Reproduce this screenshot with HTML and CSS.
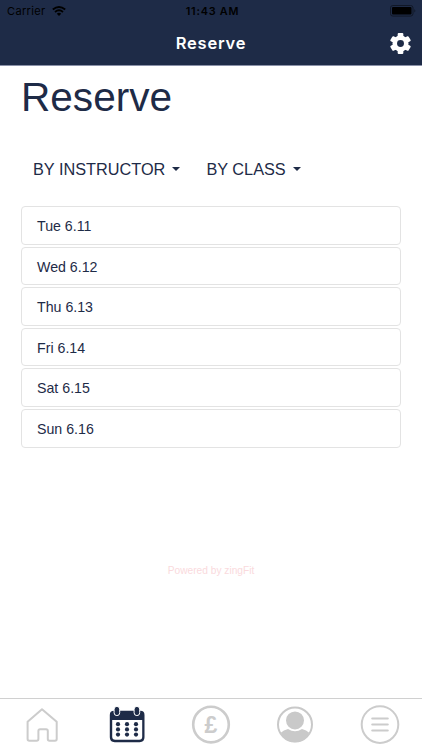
FILE: index.html
```
<!DOCTYPE html>
<html lang="en">
	<head>
		<title>Reserve</title>
		<meta charset="utf-8">
		<meta name="viewport" content="width=device-width, initial-scale=1">
		<link rel="stylesheet" href="styles.css">
	</head>
	<body>
		<header id="header">
			<div class="statusbar">
				<div class="carrier">
					<span>Carrier</span>
					<svg class="wifi" viewBox="0 0 14 10">
						<path d="M.8 3.6 Q7 -1.6 13.2 3.6" fill="none" stroke="#000" stroke-width="1.9"/>
						<path d="M3 6 Q7 2.6 11 6" fill="none" stroke="#000" stroke-width="1.8"/>
						<path d="M7 10 L4.8 7.7 Q7 6 9.2 7.7 Z"/>
					</svg>
				</div>
				<div class="time">11:43 AM</div>
				<svg class="battery" viewBox="0 0 26 12">
					<rect x=".5" y=".5" width="22.5" height="10.6" rx="2.4" fill="none" stroke="#111827"/>
					<rect x="2" y="2" width="19.5" height="7.6" rx="1"/>
					<path d="M24.4 4 Q26.2 5.8 24.4 7.6 Z" fill="#111827"/>
				</svg>
			</div>
			<div class="navbar">
				<h2>Reserve</h2>
				<svg class="gear" viewBox="0 0 20 20">
					<g fill="#fff">
						<rect id="tooth" x="7.3" y="0" width="5.4" height="20" rx="1"/>
						<use href="#tooth" transform="rotate(60 10 10)"/>
						<use href="#tooth" transform="rotate(120 10 10)"/>
						<circle cx="10" cy="10" r="7.6"/>
					</g>
					<circle cx="10" cy="10" r="3.3" fill="#1e2b47"/>
				</svg>
			</div>
		</header>

		<main id="content">
			<h1>Reserve</h1>

			<div class="filters">
				<button class="byInstructor">BY INSTRUCTOR <span class="caret"></span></button>
				<button class="byClass">BY CLASS <span class="caret"></span></button>
			</div>

			<ul class="days">
				<li>Tue 6.11</li>
				<li>Wed 6.12</li>
				<li>Thu 6.13</li>
				<li>Fri 6.14</li>
				<li>Sat 6.15</li>
				<li>Sun 6.16</li>
			</ul>

			<p class="powered">Powered by zingFit</p>
		</main>

		<nav id="tabbar">
			<a href="#">
				<svg viewBox="0 0 40 40">
					<path d="M5.6 34V16.8L20 4.2l14.7 12.6V34q0 1.7-1.7 1.7h-5.5q-1.7 0-1.7-1.7v-8q0-1.7-1.7-1.7h-6q-1.7 0-1.7 1.7v8q0 1.7-1.7 1.7H7.3q-1.7 0-1.7-1.7z" fill="none" stroke="#ccc" stroke-width="2" stroke-linejoin="round"/>
				</svg>
			</a>
			<a href="#">
				<svg viewBox="0 0 40 40" fill="#1e2b47">
					<path fill-rule="evenodd" d="M7 5.8h26.4q4.1 0 4.1 4.1V32.3q0 4.9-4.9 4.9H7.7q-4.9 0-4.9-4.9V9.9q0-4.1 4.2-4.1zM5.2 15v16.8q0 3 3 3h24q3 0 3-3V15z"/>
					<g stroke="#fff">
						<rect x="7.1" y="1.4" width="5.6" height="9.2" rx="2.8"/>
						<rect x="27.1" y="1.4" width="5.6" height="9.2" rx="2.8"/>
					</g>
					<circle cx="11" cy="19.2" r="2.1"/><circle cx="20" cy="19.2" r="2.1"/><circle cx="29" cy="19.2" r="2.1"/>
					<circle cx="11" cy="24.4" r="2.1"/><circle cx="20" cy="24.4" r="2.1"/><circle cx="29" cy="24.4" r="2.1"/>
					<circle cx="11" cy="29.6" r="2.1"/><circle cx="20" cy="29.6" r="2.1"/><circle cx="29" cy="29.6" r="2.1"/>
				</svg>
			</a>
			<a href="#">
				<svg viewBox="0 0 40 40">
					<circle cx="20" cy="19.6" r="17.8" fill="none" stroke="#ccc" stroke-width="2.6"/>
					<text x="20" y="27.6" class="pound">£</text>
				</svg>
			</a>
			<a href="#">
				<svg viewBox="0 0 40 40" fill="#c9c9c9">
					<circle cx="20" cy="19.6" r="17" fill="none" stroke="#c9c9c9" stroke-width="2"/>
					<circle cx="20" cy="15.4" r="9"/>
					<path d="M5.8 27.8Q8.5 24.9 13 24Q20 28.7 27 24Q31.5 24.9 34.2 27.8Q30 37.3 20 37.3Q10 37.3 5.8 27.8z"/>
				</svg>
			</a>
			<a href="#">
				<svg viewBox="0 0 40 40" fill="none" stroke="#ccc" stroke-width="2" stroke-linecap="round">
					<circle cx="20" cy="19.6" r="18.3"/>
					<path d="M12.2 13.6h15.6M12.2 19.6h15.6M12.2 25.6h15.6"/>
				</svg>
			</a>
		</nav>
	</body>
</html>
```
FILE: styles.css
```
/*
 * RESET
 */
* { margin: 0; padding: 0; box-sizing: border-box; }
a { text-decoration: none; }
button { border: none; background: none; }
ul { list-style: none; }
svg { display: block; }

/*
 * FONTS
 */
body, button { font-family: "Liberation Sans", Arial, sans-serif; }
#header { font-family: Inter, sans-serif; }

/*
 * LAYOUT
 * body > #header > .statusbar, .navbar
 * body > #content
 * body > #tabbar
 */
html, body { height: 100%; }
body { display: flex; flex-direction: column; overflow: hidden; }

#header { height: 66px; flex: none; border-bottom: 1px solid; }

.statusbar {
	display: grid;
	grid-template-columns: 1fr auto 1fr;
	align-items: center;
	height: 22px;
	padding: 0 6px 0 7px;
	font-size: 11px;
}
.carrier { display: flex; align-items: center; gap: 6px; letter-spacing: 0.35px; }
.wifi { width: 14px; height: 10px; }
.time { font-weight: 600; letter-spacing: 0.8px; font-size: 10.8px; padding-left: 2px; }
.battery { width: 26px; height: 12px; justify-self: end; }

.navbar {
	display: grid;
	grid-template-columns: 1fr auto 1fr;
	align-items: center;
	height: 43px;
	padding-right: 11px;
}
.navbar h2 {
	grid-column: 2;
	font-size: 16.5px; font-weight: 600;
	line-height: 20px;
	letter-spacing: 0.8px;
	padding: 0 0 2px 11px;
}
.gear { width: 21px; height: 21px; justify-self: end; }

#content { flex: 1; padding: 0 21px; }
#content h1 { font-size: 40.6px; font-weight: normal; line-height: 46px; padding-top: 8px; }

.filters { display: flex; gap: 26px; padding: 39px 0 0 12px; }
.filters button { display: flex; align-items: center; font-size: 16.3px; line-height: 20px; }
.caret {
	margin-left: 7px;
	border: 4px solid transparent;
	border-top-color: currentColor;
	border-bottom: 0;
}

.days { padding-top: 27px; }
.days li {
	height: 38.6px;
	margin-bottom: 2px;
	padding-left: 15px;
	border: 1px solid;
	border-radius: 4px;
	font-size: 14.2px; line-height: 38.6px;
}

.powered { padding-top: 115px; text-align: center; font-size: 10.2px; line-height: 12px; }

#tabbar { display: flex; flex: none; height: 52px; border-top: 1px solid; }
#tabbar a { flex: 1; display: flex; justify-content: center; padding-top: 6px; }
#tabbar svg { width: 40px; height: 40px; }
.pound { font: bold 23px "Liberation Sans", Arial, sans-serif; text-anchor: middle; }

/*
 * COLOURS
 */
body { background: #fff; color: #1e2b47; }
button { color: #1e2b47; }
#header { background: #1e2b47; border-color: #8a91a8; color: #000; }
.navbar h2 { color: #fff; }
.days li { border-color: #e3e3e3; }
.powered { color: #fadadd; }
#tabbar { border-color: #d0d0d0; }
.pound { fill: #ccc; }
```
